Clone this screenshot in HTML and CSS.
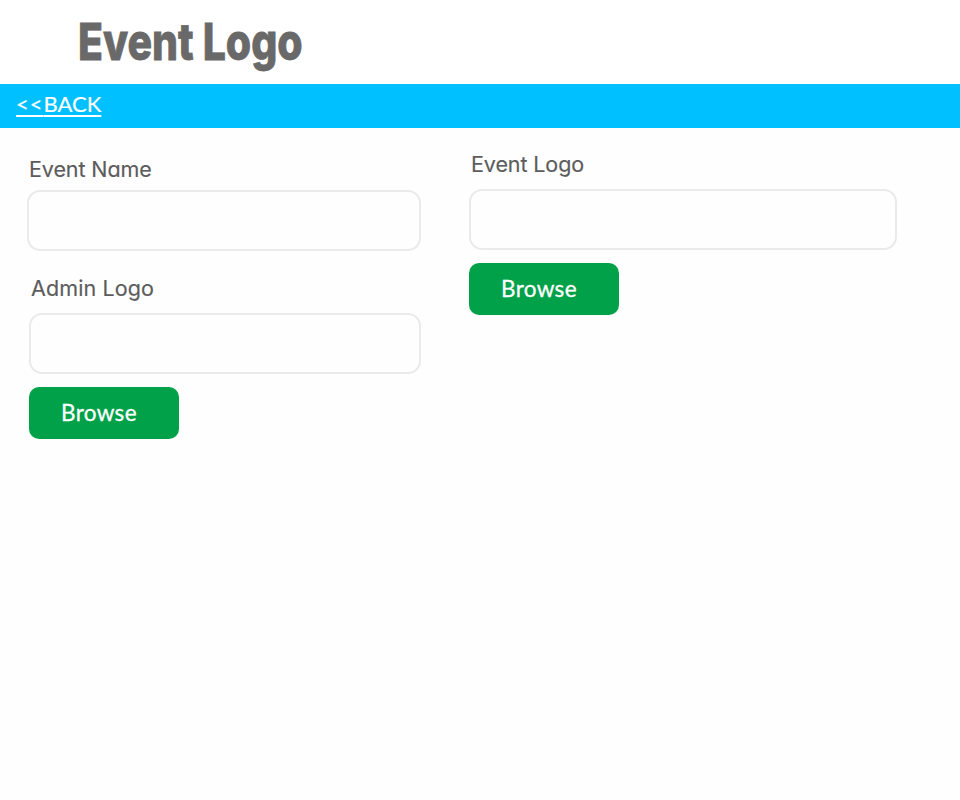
FILE: index.html
```html
<!DOCTYPE html>
<html lang="en">
<head>
<meta charset="utf-8">
<title>Event Logo</title>
<link rel="stylesheet" href="styles.css">
</head>
<body>
<header class="brand"><h1 class="brand-title">Event Logo</h1></header>
<nav class="bar"><a class="back" href="#"><span class="chevrons">&lt;&lt;</span>BACK</a></nav>
<main class="form">
  <section class="col col-left">
    <label class="label label-name" for="name">Event Name</label>
    <input class="field field-name" id="name" type="text">
    <label class="label label-admin" for="admin">Admin Logo</label>
    <input class="field field-admin" id="admin" type="text">
    <button class="browse browse-admin" type="button">Browse</button>
  </section>
  <section class="col col-right">
    <label class="label label-logo" for="logo">Event Logo</label>
    <input class="field field-logo" id="logo" type="text">
    <button class="browse" type="button">Browse</button>
  </section>
</main>
</body>
</html>
```
FILE: styles.css
```css
* { box-sizing: border-box; }
body { margin: 0; min-height: 800px; background: #fefefe; color: #5c5c5c; font-family: Inter, sans-serif; font-feature-settings: "cv11"; }
.brand { height: 84px; padding: 12px 0 0 78px; background: #fff; }
.brand-title { margin: 0; width: 226px; font: 800 51px/60px Inter, sans-serif; color: #696969; white-space: nowrap; transform: scaleX(.803); transform-origin: left; -webkit-text-stroke: .8px; }
.bar { height: 44px; padding: 6px 0 0 16px; background: #00c0ff; }
.back { display: block; width: 86px; font: 22px/28px Lato, sans-serif; color: #fff; text-decoration: underline; text-decoration-thickness: 1.5px; text-underline-offset: 3px; white-space: nowrap; -webkit-text-stroke: .2px; }
.chevrons { letter-spacing: 1px; }
.form { display: grid; grid-template-columns: 394px 428px; column-gap: 48px; padding-left: 27px; }
.col { display: flex; flex-direction: column; align-items: flex-start; }
.col-left { padding-top: 26px; }
.col-right { padding-top: 21px; }
.label { font-size: 21.5px; line-height: 30px; padding-left: 2px; white-space: nowrap; letter-spacing: -.1px; -webkit-text-stroke: .15px; }
.label-admin { margin-top: 22px; padding-left: 4px; letter-spacing: .1px; }
.field { width: 100%; height: 61px; border: 2px solid #eaeaea; border-radius: 13px; background: #fefefe; padding: 0 14px; font: 22px Inter, sans-serif; outline: 0; }
.field-name { margin-top: 6px; }
.field-admin { width: 392px; margin: 10px 0 0 2px; }
.field-logo { margin-top: 10px; }
.browse { width: 150px; height: 52px; margin-top: 13px; padding: 0 0 0 32px; border: 0; border-radius: 10px; background: #00a148; color: #fff; font: 22.5px/52px Lato, sans-serif; letter-spacing: .35px; text-align: left; -webkit-text-stroke: .3px; }
.browse-admin { margin-left: 2px; }
```
